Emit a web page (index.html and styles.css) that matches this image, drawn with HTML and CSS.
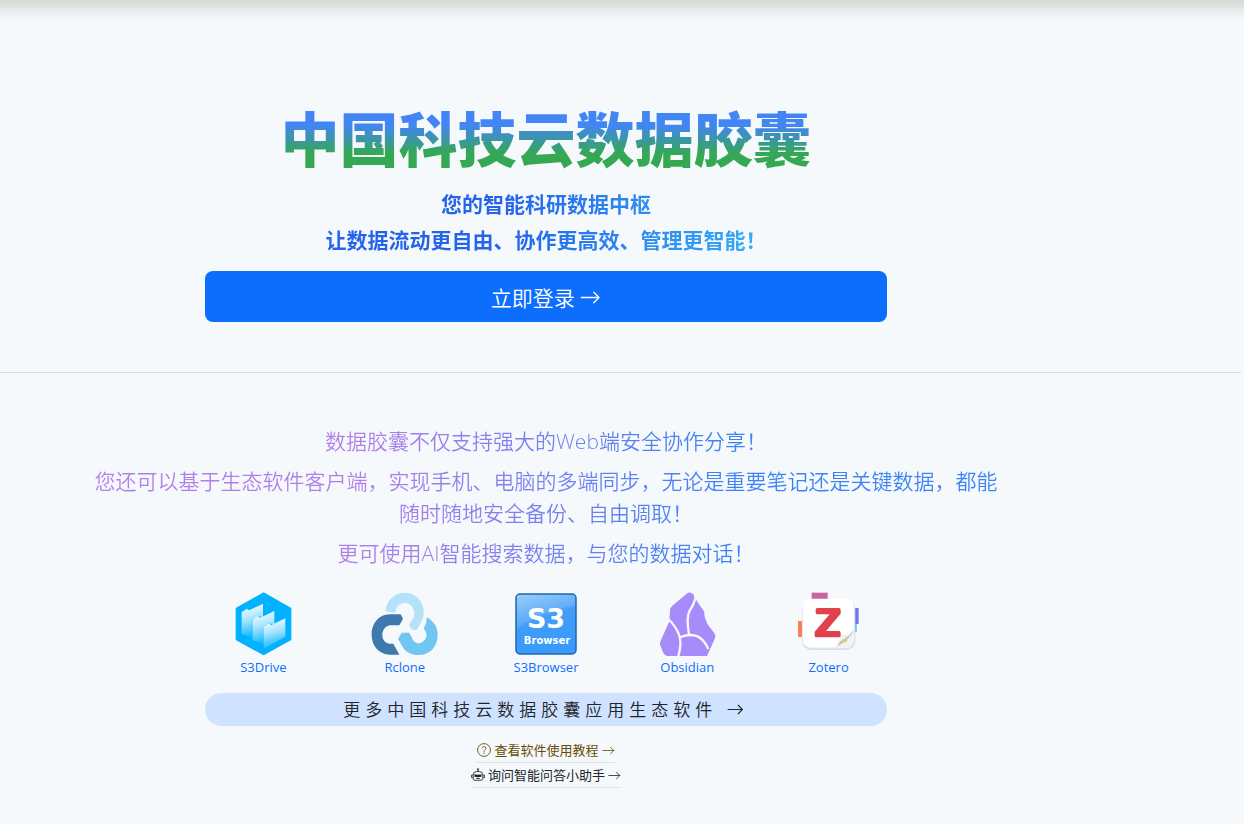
FILE: index.html
```html
<!DOCTYPE html>
<html lang="zh-CN">
<head>
    <meta charset="UTF-8">
    <title>中国科技云数据胶囊</title>
    <meta name="viewport" content="width=device-width, initial-scale=1.0">
    <link rel="stylesheet" href="styles.css">
</head>
<body>
    <header class="top-bar"></header>
    <main>
        <section class="hero">
            <h1 class="title">中国科技云数据胶囊</h1>
            <p class="slogan">您的智能科研数据中枢</p>
            <p class="slogan">让数据流动更自由、协作更高效、管理更智能！</p>
            <button class="login-btn" type="button">立即登录
                <svg class="arrow" viewBox="0 0 16 16"><path d="M1 8h13.5M10.5 4l4 4-4 4"/></svg>
            </button>
        </section>
        <hr class="divider">
        <section class="eco">
            <div class="intro">
                <p>数据胶囊不仅支持强大的Web端安全协作分享！</p>
                <p>您还可以基于生态软件客户端，实现手机、电脑的多端同步，无论是重要笔记还是关键数据，都能随时随地安全备份、自由调取！</p>
                <p>更可使用AI智能搜索数据，与您的数据对话！</p>
            </div>
            <nav class="apps">
                <a class="app" href="#">
                    <svg class="app-icon" viewBox="5 13 190 192">
                        <defs>
                            <linearGradient id="folder" x1="0.1" y1="0" x2="0.3" y2="1">
                                <stop offset="0.1" stop-color="#f2fbff"/>
                                <stop offset="0.5" stop-color="#a5e3ff"/>
                                <stop offset="1" stop-color="#12b7ff"/>
                            </linearGradient>
                        </defs>
                        <path fill="#00b2ff" d="M100 14l83 47v96l-83 46-84-46V61z"/>
                        <path fill="url(#folder)" d="M34 74l16-11 6 5 42-20v42l-13-5-18 10v55l-33-12z"/>
                        <path fill="url(#folder)" d="M67 95l16-10 7 5 42-20v42l-14-5-18 10v53l-33-12z"/>
                        <path fill="url(#folder)" d="M100 117l16-10 7 5 42-20v55l-65 36z"/>
                    </svg>
                    <span>S3Drive</span>
                </a>
                <a class="app" href="#">
                    <svg class="app-icon" viewBox="13 12 202 192">
                        <path fill="#b4e3f9" d="M57 66C60 36 84 14 114 14C157 14 186 62 164 101L151 125Q141 128 134 123L127 110L140 90C150 70 135 45 114 45C98 45 86 58 86 74Q70 73 57 70z"/>
                        <path fill="#3f79ad" d="M102 79L109 93L98 112H72C40 114 38 165 70 167H80L98 200H70C-5 198 -2 80 70 79z"/>
                        <path fill="#70c6f0" d="M105 134H128L135 148C140 165 157 172 170 160C182 150 183 134 171 122Q181 105 181 88C200 100 213 115 213 140C213 178 188 201 155 201C135 201 118 193 110 180L94 153z"/>
                    </svg>
                    <span>Rclone</span>
                </a>
                <a class="app" href="#">
                    <svg class="app-icon" viewBox="0 0 64 64">
                        <defs>
                            <linearGradient id="s3b" x1="0" y1="0" x2="0.3" y2="1">
                                <stop offset="0" stop-color="#8cc8fb"/>
                                <stop offset="0.5" stop-color="#429df8"/>
                                <stop offset="1" stop-color="#389bfb"/>
                            </linearGradient>
                        </defs>
                        <rect x="2" y="2" width="60" height="60" rx="4" fill="url(#s3b)" stroke="#2265ad" stroke-width="1.5"/>
                        <path fill="#fff" opacity=".12" d="M3 3h58v11Q32 17 3 37z"/>
                        <text class="s3-big" x="32" y="36">S3</text>
                        <text class="s3-small" x="33" y="52">Browser</text>
                    </svg>
                    <span>S3Browser</span>
                </a>
                <a class="app" href="#">
                    <svg class="app-icon" viewBox="465 21 190 192">
                        <path fill="#a78bfa" d="M557 26Q567 18 577 28Q583 45 610 80Q608 96 619 116L640 145Q645 150 642 160L618 213H499Q489 210 486 202L478 181Q475 175 480 165L504 112Q507 85 507 76Q508 67 516 61z"/>
                        <g fill="none" stroke="#f5f9fc" stroke-width="7">
                            <path d="M584 31Q583 51 566 77Q555 96 564 149"/>
                            <path d="M502 102Q526 125 535 152Q543 180 531 216"/>
                            <path d="M537 157Q596 133 622 192"/>
                        </g>
                    </svg>
                    <span>Obsidian</span>
                </a>
                <a class="app" href="#">
                    <svg class="app-icon" viewBox="55 36 190 192">
                        <rect x="99" y="38" width="48" height="24" fill="#c9659c"/>
                        <rect x="58" y="123" width="24" height="48" fill="#f98052"/>
                        <rect x="214" y="84" width="26" height="48" fill="#7077ee"/>
                        <rect x="214" y="132" width="20" height="24" fill="#55b9ef"/>
                        <rect x="70" y="61" width="160" height="149" rx="28" fill="#d9dde1"/>
                        <rect x="73" y="59" width="154" height="146" rx="26" fill="#f2f3f4"/>
                        <path fill="#e6cf65" d="M176 185l30-24v21q-2 5-8 5h-22z"/>
                        <path fill="#fff" d="M96 56h104q25 0 25 25v68q-3 18-23 33t-36 19H96q-24 0-24-24V80q0-24 24-24z"/>
                        <path fill="#bfc3c6" d="M225 149q-6 18-23 33t-36 20q20-6 21-34q22 3 38-19z"/>
                        <path fill="#f1f1f1" d="M225 149q-10 17-26 26t-33 26q18-12 17-37q25 5 42-15z"/>
                        <path fill="#e6cf65" d="M190 187l15-13v9q-2 4-7 4z"/>
                        <path fill="#e1414b" d="M116 84h65q5 0 5 6v11l-44 52h39q5 0 5 5v9q0 5-5 5h-68q-5 0-5-5v-12l45-52h-37q-5 0-5-5V89q0-5 5-5z"/>
                    </svg>
                    <span>Zotero</span>
                </a>
            </nav>
            <a class="more" href="#">更多中国科技云数据胶囊应用生态软件
                <svg class="arrow" viewBox="0 0 16 16"><path d="M1 8h13.5M10.5 4l4 4-4 4"/></svg>
            </a>
            <div class="help">
                <a class="help-link guide" href="#">
                    <svg class="help-icon" viewBox="0 0 16 16"><circle cx="8" cy="8" r="7.3"/><path d="M5.8 6.2C5.8 3.3 10.3 3.4 10.3 6C10.3 7.8 8 7.8 8 10M8 11v1.6"/></svg>
                    查看软件使用教程
                    <svg class="arrow" viewBox="0 0 16 16"><path d="M1 8h13.5M10.5 4l4 4-4 4"/></svg>
                </a>
                <a class="help-link robot" href="#">
                    <svg class="help-icon" viewBox="0 0 16 16"><path d="M8 4V2M2.500 12V8Q2.500 4 6.500 4h3Q13.500 4 13.500 8v4q0 2-2 2h-7q-2 0-2-2zM2 8H.7v3H2M14 8h1.300v3H14M6 12h4"/><circle cx="8" cy="1.500" r=".8"/><path class="solid" d="M4 7l4 .7L12 7v3l-4 .5L4 10z"/></svg>
                    询问智能问答小助手
                    <svg class="arrow" viewBox="0 0 16 16"><path d="M1 8h13.5M10.5 4l4 4-4 4"/></svg>
                </a>
            </div>
        </section>
    </main>
</body>
</html>
```
FILE: styles.css
```css
* {
    box-sizing: border-box;
}
body {
    margin: 0;
    background: #f5f9fc;
    color: #212529;
    font-family: "Open Sans", "Noto Sans CJK SC", sans-serif;
    font-size: 13px;
}
h1, p {
    margin: 0;
}
a {
    color: #0d6efd;
    text-decoration: none;
}
.top-bar {
    height: 20px;
    background: linear-gradient(#d7dbd8 0, #dfe3e1 8px, #e4e9ec 8px, #f5f9fc 20px);
}
.hero, .eco {
    display: flex;
    flex-direction: column;
    align-items: center;
    padding: 84px 243px 50px 91px;
    text-align: center;
}
.title {
    width: 100%;
    margin-bottom: 13px;
    font-size: 59px;
    font-weight: 900;
    line-height: 71px;
    background: linear-gradient(#4285f4 30%, #34a853 70%);
    -webkit-background-clip: text;
    background-clip: text;
    color: transparent;
}
.slogan {
    width: 100%;
    margin-bottom: 4px;
    font-size: 21px;
    font-weight: 700;
    line-height: 32px;
    background: linear-gradient(to right, #2563eb 45%, #38bdf8 80%);
    -webkit-background-clip: text;
    background-clip: text;
    color: transparent;
}
.login-btn {
    width: 75%;
    height: 51px;
    margin-top: 11px;
    border: none;
    border-radius: 8px;
    background: #0d6efd;
    color: #fff;
    font-family: inherit;
    font-size: 21px;
    font-weight: 350;
    cursor: pointer;
}
.arrow {
    width: 1em;
    height: 1em;
    vertical-align: -2px;
    fill: none;
    stroke: currentColor;
    stroke-linecap: round;
    stroke-linejoin: round;
}
.divider {
    height: 1px;
    margin: 0 3px 0 0;
    border: none;
    background: #d9dde1;
}
.eco {
    padding-top: 52px;
    padding-bottom: 32px;
}
.intro {
    display: flex;
    flex-direction: column;
    gap: 8px;
    width: 100%;
    font-size: 21px;
    font-weight: 350;
    line-height: 32px;
    background: linear-gradient(to right, #b07ee8 30%, #3b82f6 70%);
    -webkit-background-clip: text;
    background-clip: text;
    color: transparent;
}
.apps {
    display: flex;
    width: calc(75% + 24px);
    margin: 23px 0 15px;
}
.app {
    display: flex;
    flex: 1;
    flex-direction: column;
    align-items: center;
    line-height: 22px;
}
.app-icon {
    height: 64px;
}
.s3-big, .s3-small {
    fill: #fff;
    font-family: "DejaVu Sans", sans-serif;
    font-weight: 700;
    text-anchor: middle;
}
.s3-big {
    font-size: 27px;
}
.s3-small {
    font-size: 10px;
}
.more {
    width: 75%;
    padding-right: 5px;
    border-radius: 17px;
    background: #cfe2ff;
    color: #212529;
    font-size: 17px;
    font-weight: 350;
    letter-spacing: 5px;
    line-height: 33px;
}
.help {
    display: flex;
    flex-direction: column;
    align-items: center;
    margin-top: 12px;
}
.help-link {
    border-bottom: 1px solid #dee2e6;
    color: #212529;
    line-height: 24px;
}
.guide {
    color: #664d03;
}
.help-icon {
    width: 14px;
    height: 14px;
    vertical-align: -2px;
    fill: none;
    stroke: currentColor;
}
.solid {
    fill: currentColor;
    stroke: none;
}
```
